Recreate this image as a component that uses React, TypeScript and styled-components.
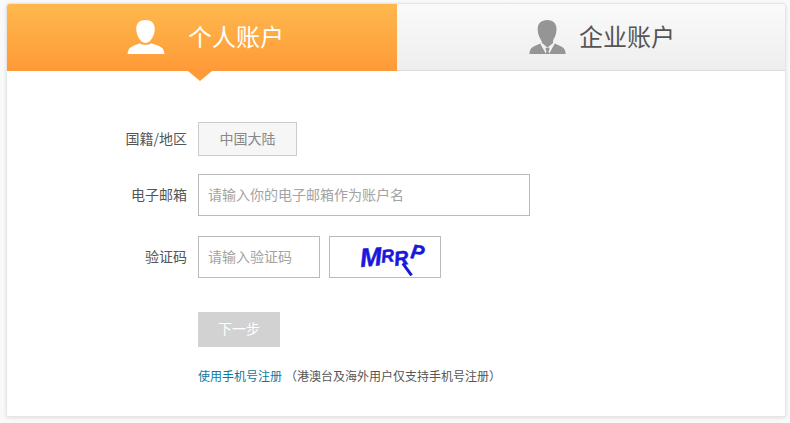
import React from "react";
import styled, { createGlobalStyle } from "styled-components";

const Global = createGlobalStyle`
  html, body { margin: 0; padding: 0; background: #f9f9f9; }
  body { font-family: "Noto Sans CJK SC", "Liberation Sans", sans-serif; }
`;

const Page = styled.div`
  width: 790px;
  height: 423px;
  padding: 4px 5px 7px 7px;
  box-sizing: border-box;
  overflow: hidden;
`;

const Card = styled.div`
  width: 778px;
  height: 412px;
  background: #fff;
  border-radius: 3px 3px 0 0;
  box-shadow: 0 0 0 1px #e6e6e6, 0 1px 4px rgba(0, 0, 0, 0.16);
`;

const Tabs = styled.div`
  display: flex;
  height: 67px;
`;

const Tab = styled.div<{ $active?: boolean }>`
  position: relative;
  box-sizing: border-box;
  width: ${(p) => (p.$active ? "390px" : "388px")};
  display: flex;
  align-items: center;
  justify-content: center;
  gap: ${(p) => (p.$active ? "23px" : "12px")};
  padding-left: ${(p) => (p.$active ? "7px" : "22px")};
  font-size: 24px;
  color: ${(p) => (p.$active ? "#fff" : "#555")};
  background: ${(p) =>
    p.$active
      ? "linear-gradient(#ffb84d, #fe9a38)"
      : "linear-gradient(#fafafa, #eeeeee)"};
  border-bottom: ${(p) => (p.$active ? "none" : "1px solid #dcdcdc")};
  border-radius: ${(p) => (p.$active ? "3px 0 0 0" : "0 3px 0 0")};
`;

const TabTitle = styled.span`
  line-height: 30px;
  margin-top: -3px;
`;

const TabIcon = styled.svg`
  display: block;
  flex: none;
  margin-top: -1px;
`;

const Arrow = styled.span`
  position: absolute;
  left: 181px;
  top: 100%;
  width: 0;
  height: 0;
  border-left: 12.5px solid transparent;
  border-right: 12.5px solid transparent;
  border-top: 10px solid #fe9a38;
`;

const Form = styled.div`
  display: flex;
  flex-direction: column;
  padding-top: 51px;
`;

const Row = styled.div<{ $mb: number }>`
  display: flex;
  align-items: center;
  margin-bottom: ${(p) => p.$mb}px;
`;

const Label = styled.label`
  width: 180px;
  margin-right: 11px;
  padding-bottom: 3px;
  text-align: right;
  font-size: 14px;
  line-height: 20px;
  color: #555;
  white-space: nowrap;
`;

const Region = styled.div`
  box-sizing: border-box;
  width: 99px;
  height: 34px;
  line-height: 30px;
  border: 1px solid #ccc;
  background: #f6f6f6;
  color: #888;
  font-size: 14px;
  text-align: center;
`;

const Input = styled.input<{ $w: number }>`
  box-sizing: border-box;
  width: ${(p) => p.$w}px;
  height: 42px;
  padding: 0 9px 2px 9px;
  border: 1px solid #bbb;
  outline: none;
  font-family: inherit;
  font-size: 14px;
  background: #fff;
  &::placeholder { color: #a3a3a3; opacity: 1; }
`;

const Captcha = styled.div`
  box-sizing: border-box;
  width: 112px;
  height: 42px;
  margin-left: 9px;
  border: 1px solid #bbb;
  background: #fff;
  display: flex;
  align-items: center;
  padding: 0 0 4px 30px;
`;

const CaptchaChar = styled.span<{ $size: number; $rot: number; $y: number; $gap: number; $tail?: boolean }>`
  position: relative;
  display: inline-block;
  font-family: "Liberation Sans", sans-serif;
  font-weight: 700;
  font-style: italic;
  color: #1818dc;
  -webkit-text-stroke: 0.5px #1818dc;
  font-size: ${(p) => p.$size}px;
  line-height: 1;
  margin-right: ${(p) => p.$gap}px;
  transform: translateY(${(p) => p.$y}px) rotate(${(p) => p.$rot}deg);
  &::after {
    content: "";
    display: ${(p) => (p.$tail ? "block" : "none")};
    position: absolute;
    left: 8px;
    top: 14px;
    width: 15px;
    height: 3px;
    background: #1818dc;
    transform: rotate(62deg);
    transform-origin: 0 50%;
  }
`;

const Actions = styled.div`
  padding-left: 191px;
`;

const NextButton = styled.button`
  display: block;
  width: 82px;
  height: 35px;
  padding: 0 0 3px;
  border: none;
  background: #d2d2d2;
  color: #fff;
  font-family: inherit;
  font-size: 14px;
`;

const Hint = styled.div`
  margin-top: 19px;
  font-size: 12px;
  line-height: 20px;
  color: #555;
  white-space: nowrap;
`;

const PhoneLink = styled.a`
  color: #0b7a9e;
  text-decoration: none;
  margin-right: 3px;
`;

const PersonIcon = () => (
  <TabIcon width="38" height="34" viewBox="0 0 38 34" aria-hidden="true">
    <path
      fill="#fff"
      d="M18.500 0c5.800 0 9.300 3.400 9.300 8.800 0 2.200-.4 4.400-1.200 6.300-1.100 2.700-2.500 5-4.200 6.500-1.100 1-2.500 1.400-3.900 1.400s-2.800-.4-3.900-1.400c-1.700-1.500-3.100-3.800-4.200-6.500-.8-1.900-1.200-4.100-1.200-6.300C9.200 3.400 12.700 0 18.500 0z"
    />
    <path
      fill="#fff"
      d="M12.500 23.300c1.600 1 3.600 1.500 6 1.500s4.400-.5 6-1.500c3 1.200 7 2.300 9.600 4 2 1.300 3 3.300 3.400 6.700H.5c.4-3.400 1.400-5.400 3.400-6.700 2.600-1.700 6.600-2.800 8.600-4z"
    />
  </TabIcon>
);

const BusinessIcon = () => (
  <TabIcon width="38" height="34" viewBox="0 0 38 34" aria-hidden="true">
    <path
      fill="#959595"
      d="M18.500 0c5.800 0 9 3.600 9 9 0 2.500-.5 5-1.300 7-.5 1.300-1 2.500-1.700 3.500-.6 1-.7 2.300-.2 3.300L19 27.300h-1l-5.300-4.500c.5-1-.4-2.300-1-3.300-.7-1-1.200-2.200-1.700-3.500-.8-2-1.300-4.500-1.300-7 0-5.400 3.200-9 9.800-9z"
    />
    <path
      fill="#959595"
      d="M11.200 23.500L17 34H.3c.3-3.200 1-5 2.600-6.300 2.200-1.800 5.600-2.900 8.300-4.200zM25.800 23.500c2.700 1.300 6.100 2.400 8.300 4.200 1.600 1.300 2.300 3.100 2.600 6.300H20l5.800-10.500z"
    />
    <path fill="#959595" d="M16.800 27.800h3.400l.3 1.800-1 1.400.8 3h-3.600l.8-3-1-1.400z" />
  </TabIcon>
);

export default function App() {
  return (
    <Page>
      <Global />
      <Card>
        <Tabs>
          <Tab $active>
            <PersonIcon />
            <TabTitle>个人账户</TabTitle>
            <Arrow />
          </Tab>
          <Tab>
            <BusinessIcon />
            <TabTitle>企业账户</TabTitle>
          </Tab>
        </Tabs>
        <Form>
          <Row $mb={18}>
            <Label>国籍/地区</Label>
            <Region>中国大陆</Region>
          </Row>
          <Row $mb={20}>
            <Label>电子邮箱</Label>
            <Input $w={332} placeholder="请输入你的电子邮箱作为账户名" />
          </Row>
          <Row $mb={34}>
            <Label>验证码</Label>
            <Input $w={122} placeholder="请输入验证码" />
            <Captcha>
              <CaptchaChar $size={26} $rot={-5} $y={2} $gap={-1}>M</CaptchaChar>
              <CaptchaChar $size={18} $rot={-6} $y={1} $gap={0}>R</CaptchaChar>
              <CaptchaChar $size={20} $rot={-8} $y={3} $gap={3} $tail>R</CaptchaChar>
              <CaptchaChar $size={20} $rot={8} $y={-3} $gap={0}>P</CaptchaChar>
            </Captcha>
          </Row>
          <Actions>
            <NextButton>下一步</NextButton>
            <Hint>
              <PhoneLink href="#">使用手机号注册</PhoneLink>（港澳台及海外用户仅支持手机号注册）
            </Hint>
          </Actions>
        </Form>
      </Card>
    </Page>
  );
}
